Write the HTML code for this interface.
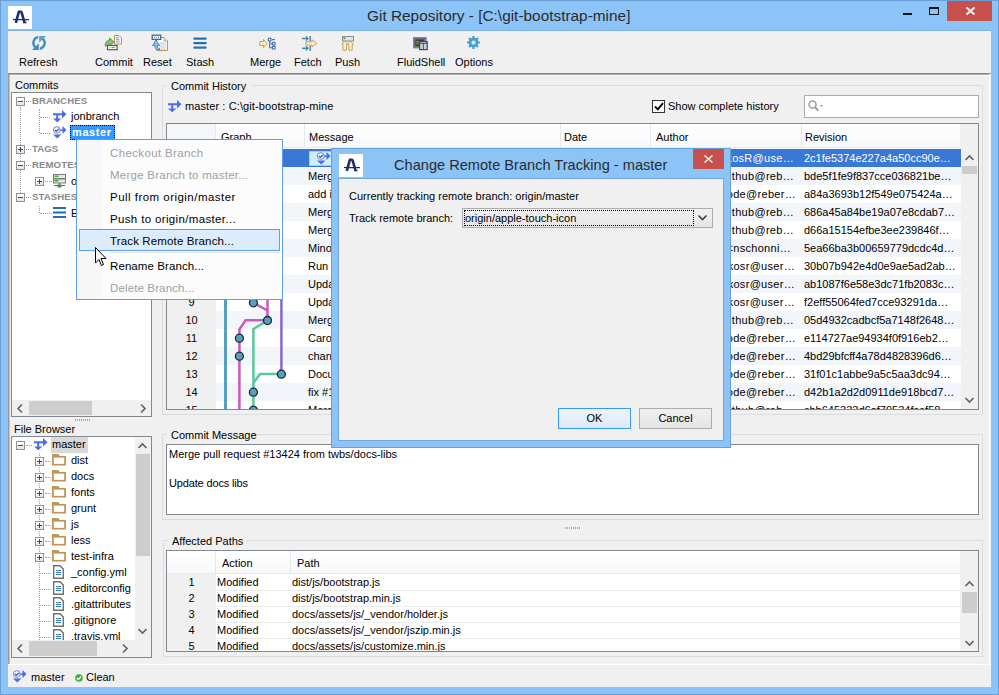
<!DOCTYPE html><html><head><meta charset="utf-8"><style>
*{margin:0;padding:0;box-sizing:border-box}
html,body{width:999px;height:695px;overflow:hidden}
body{position:relative;background:#8cc4f7;font-family:"Liberation Sans",sans-serif;font-size:11px;color:#000}
div{position:absolute}
.t{white-space:nowrap}
svg{position:absolute;overflow:visible}
</style></head><body>
<div style="position:absolute;left:0px;top:0px;width:999px;height:695px;border:1px solid #6a9fd6"></div>
<div style="position:absolute;left:8px;top:6px;width:24px;height:23px;background:#fff"></div>
<svg style="left:8px;top:6px" width="24" height="23" viewBox="0 0 24 23"><path d="M7.8 16.8 L10.9 5.6" stroke="#1d2d6b" stroke-width="2.6" fill="none"/><path d="M10 5.6 H13.8" stroke="#1d2d6b" stroke-width="2.2"/><path d="M13.4 5.6 L16.6 16.8" stroke="#1d2d6b" stroke-width="2.6" fill="none"/><path d="M15.5 16.6 H18.5" stroke="#1d2d6b" stroke-width="1.4"/><path d="M5 13.4 Q8 13.8 9 13.6 L21 13.6" stroke="#1d2d6b" stroke-width="1.4" fill="none"/></svg>
<div class="t" style="left:367px;top:7px;font-size:15.4px;line-height:18px;color:#2b2b2b;font-weight:normal;">Git Repository - [C:\git-bootstrap-mine]</div>
<div style="position:absolute;left:903px;top:13px;width:9px;height:2px;background:#111"></div>
<div style="position:absolute;left:929px;top:7px;width:10px;height:8px;border:1px solid #111;border-top-width:2px"></div>
<div style="position:absolute;left:947px;top:1px;width:45px;height:20px;background:#c7504c"></div>
<svg style="left:966px;top:7px" width="9" height="8"><path d="M0.5 0.5 L8.5 7.5 M8.5 0.5 L0.5 7.5" stroke="#fff" stroke-width="1.8"/></svg>
<div style="position:absolute;left:8px;top:31px;width:983px;height:656px;background:#f0f0f0"></div>
<div style="position:absolute;left:8px;top:30px;width:983px;height:1px;background:#7fb3e6"></div>
<div class="t" style="left:19px;top:56px;font-size:11px;line-height:13px;color:#000;font-weight:normal;">Refresh</div>
<div class="t" style="left:95px;top:56px;font-size:11px;line-height:13px;color:#000;font-weight:normal;">Commit</div>
<div class="t" style="left:143px;top:56px;font-size:11px;line-height:13px;color:#000;font-weight:normal;">Reset</div>
<div class="t" style="left:186px;top:56px;font-size:11px;line-height:13px;color:#000;font-weight:normal;">Stash</div>
<div class="t" style="left:250px;top:56px;font-size:11px;line-height:13px;color:#000;font-weight:normal;">Merge</div>
<div class="t" style="left:294px;top:56px;font-size:11px;line-height:13px;color:#000;font-weight:normal;">Fetch</div>
<div class="t" style="left:335px;top:56px;font-size:11px;line-height:13px;color:#000;font-weight:normal;">Push</div>
<div class="t" style="left:397px;top:56px;font-size:11px;line-height:13px;color:#000;font-weight:normal;">FluidShell</div>
<div class="t" style="left:455px;top:56px;font-size:11px;line-height:13px;color:#000;font-weight:normal;">Options</div>
<div style="position:absolute;left:8px;top:73px;width:983px;height:1px;background:#8a8a8a"></div>
<svg style="left:31px;top:35px" width="16" height="16" viewBox="0 0 16 16"><path d="M7.2 2.2 A5.9 5.9 0 0 0 4.2 12.3" stroke="#3f8bc2" stroke-width="2.3" fill="none"/><path d="M1 14.9 H7.8 V8.3 Z" fill="#3f8bc2"/><path d="M8.8 13.8 A5.9 5.9 0 0 0 11.8 3.7" stroke="#3f8bc2" stroke-width="2.3" fill="none"/><path d="M8.2 1 H15 L8.2 7.7 Z" fill="#5a9fd0"/></svg>
<svg style="left:104px;top:34px" width="19" height="17" viewBox="0 0 19 17"><path d="M10.5 1.5 H15 L17.5 4 V10 H10.5 Z" fill="#fff" stroke="#c0904e"/><path d="M12 3.8 H15 M12 5.8 H15.5 M12 7.8 H15.5" stroke="#4a88c8" stroke-width="0.9"/><path d="M1.2 11.5 Q1 7 5.5 6 V4 L10 8 L6 11.5 V9.5 Q3.2 9.5 1.5 12.5 Z" fill="#86c486" stroke="#3a8a3a" stroke-width="0.8"/><rect x="3.5" y="11.5" width="9.6" height="4.2" fill="#fff" stroke="#5a5a5a" stroke-width="1.2"/><path d="M5.5 13.6 H6.3 M7.5 13.6 H11" stroke="#888" stroke-width="1"/></svg>
<svg style="left:151px;top:34px" width="18" height="18" viewBox="0 0 18 18"><path d="M5.5 3.5 H13 L16.5 7 V16.5 H5.5 Z" fill="#fff" stroke="#c0904e"/><path d="M13 3.5 V7 H16.5" fill="#f5e6c0" stroke="#c0904e" stroke-width="0.8"/><path d="M8 9 H15 M8 11 H15 M8 13 H15 M8 15 H15" stroke="#a8b8d0" stroke-width="0.8"/><rect x="1.2" y="1.2" width="8.5" height="4.2" fill="#fff" stroke="#2a6ab0" stroke-width="1.3"/><path d="M3 3.3 H3.9 M5 3.3 H5.9 M7 3.3 H7.9" stroke="#2a6ab0" stroke-width="1"/><path d="M1.5 11.5 L5 6 L8.5 11.5 H6.5 V13 Q6.5 14.5 8.5 14.5 V16 Q4 16 4 13 V11.5 Z" fill="#8cc0e6" stroke="#3a7ab0" stroke-width="0.8"/></svg>
<svg style="left:193px;top:37px" width="14" height="12"><rect x="0.5" y="0.5" width="13" height="2.2" fill="#2a6ab0"/><rect x="0.5" y="5" width="13" height="2.2" fill="#2a6ab0"/><rect x="0.5" y="9.5" width="13" height="2.2" fill="#2a6ab0"/></svg>
<svg style="left:259px;top:37px" width="18" height="13" viewBox="0 0 18 13"><path d="M0.8 4.5 H4.5 V2.3 L8 6.5 L4.5 10.7 V8.5 H0.8 Z" fill="#fdf0cc" stroke="#c8a060" stroke-width="1"/><rect x="9.4" y="1.3" width="2.6" height="2.6" fill="#fff" stroke="#4a70b0" stroke-width="1.1"/><rect x="13.4" y="5.4" width="2.6" height="2.6" fill="#fff" stroke="#4a70b0" stroke-width="1.1"/><rect x="13.4" y="9.4" width="2.6" height="2.6" fill="#fff" stroke="#4a70b0" stroke-width="1.1"/><path d="M10.7 4 V10.7 H13.3 M10.7 6.7 H13.3 M13 2.6 H16" stroke="#4a70b0" stroke-width="1.1" fill="none"/></svg>
<svg style="left:301px;top:35px" width="18" height="17" viewBox="0 0 18 17"><path d="M1 3.5 H6.5 M5 1.5 L7 3.5 L5 5.5 M1 13.3 H6.5 M5 11.3 L7 13.3 L5 15.3" stroke="#4a88b8" stroke-width="1.4" fill="none"/><path d="M9.2 1 V6 M9.2 11 V16" stroke="#4a6a90" stroke-width="1.2"/><path d="M4.8 6.8 H11 V4.8 L15.8 8.4 L11 12 V10 H4.8 Z" fill="#fdf0cc" stroke="#c8a060" stroke-width="1"/></svg>
<svg style="left:341px;top:35px" width="14" height="16" viewBox="0 0 14 16"><rect x="1.5" y="1.5" width="11" height="4.5" fill="#dfe3f0" stroke="#8a8a8a"/><rect x="2.5" y="2.5" width="2" height="1.6" fill="#2a2"/><path d="M2 15.2 V9.5 H0.8 L3.7 6 L6.6 9.5 H5.4 V15.2 Z M7.8 15.2 V9.5 H6.6 L9.5 6 L12.4 9.5 H11.2 V15.2 Z" fill="#fdf0cc" stroke="#c8a060" stroke-width="1"/></svg>
<svg style="left:413px;top:37px" width="15" height="13" viewBox="0 0 15 13"><rect x="0.7" y="0.7" width="12.3" height="10" fill="#5a5550" stroke="#5a8ac8" stroke-width="1.4"/><rect x="2" y="2" width="9.6" height="7.4" fill="#3c3a38" stroke="#8a8a8a" stroke-width="0.6"/><path d="M3 4.6 H6.5 M3 6.8 H6.5" stroke="#3c3" stroke-width="1.1"/><rect x="6.6" y="4.6" width="7.6" height="8" fill="#d0d0d8" stroke="#3a4a6a" stroke-width="1.2"/><path d="M6.6 6.4 H14.2 M10.4 6.4 V12.6" stroke="#3a4a6a" stroke-width="0.9"/></svg>
<svg style="left:467px;top:36px" width="13" height="13" viewBox="0 0 13 13"><path d="M10.95 5.32 L12.91 5.40 L12.91 7.60 L10.95 7.68 L10.48 8.81 L11.81 10.25 L10.25 11.81 L8.81 10.48 L7.68 10.95 L7.60 12.91 L5.40 12.91 L5.32 10.95 L4.19 10.48 L2.75 11.81 L1.19 10.25 L2.52 8.81 L2.05 7.68 L0.09 7.60 L0.09 5.40 L2.05 5.32 L2.52 4.19 L1.19 2.75 L2.75 1.19 L4.19 2.52 L5.32 2.05 L5.40 0.09 L7.60 0.09 L7.68 2.05 L8.81 2.52 L10.25 1.19 L11.81 2.75 L10.48 4.19Z" fill="#4a9fd0"/><circle cx="6.5" cy="6.5" r="4.7" fill="#4a9fd0"/><circle cx="6.5" cy="6.5" r="2" fill="#f0f0f0"/></svg>
<div style="position:absolute;left:8px;top:74px;width:1px;height:590px;background:#989898"></div>
<div style="position:absolute;left:9px;top:75px;width:1px;height:589px;background:#c4c4c4"></div>
<div style="position:absolute;left:9px;top:74px;width:980px;height:1px;background:#a8a8a8"></div>
<div style="position:absolute;left:10px;top:75px;width:979px;height:1px;background:#fafafa"></div>
<div style="position:absolute;left:989px;top:74px;width:1px;height:590px;background:#fff"></div>
<div class="t" style="left:15px;top:79px;font-size:11px;line-height:13px;color:#000;font-weight:normal;">Commits</div>
<div style="position:absolute;left:11px;top:92px;width:141px;height:325px;background:#fff;border:1px solid #828790"></div>
<div style="position:absolute;left:16px;top:97px;width:9px;height:9px;border:1px solid #919191;background:linear-gradient(#fff,#e6e6e6)"></div>
<div style="position:absolute;left:18px;top:101px;width:5px;height:1px;background:#2a4a8a"></div>
<div style="position:absolute;left:26px;top:101px;width:5px;height:1px;border-top:1px dotted #a0a0a0"></div>
<div class="t" style="left:32px;top:95px;font-size:9.6px;line-height:11px;color:#8a8a8a;font-weight:bold;letter-spacing:0.1px">BRANCHES</div>
<div style="position:absolute;left:20px;top:107px;width:1px;height:90px;border-left:1px dotted #a0a0a0"></div>
<div style="position:absolute;left:39px;top:109px;width:1px;height:24px;border-left:1px dotted #a0a0a0"></div>
<div style="position:absolute;left:40px;top:117px;width:10px;height:1px;border-top:1px dotted #a0a0a0"></div>
<div style="position:absolute;left:40px;top:133px;width:10px;height:1px;border-top:1px dotted #a0a0a0"></div>
<svg style="left:53px;top:110px" width="14" height="13" viewBox="0 0 14 13"><path d="M0 3.3 H9 V0 L13.5 4.2 L9 8.4 V5.2 H0 Z" fill="#4a6cf0"/><rect x="3.2" y="5" width="2" height="4" fill="#4a6cf0"/><path d="M0 8.5 H8.4 L4.2 12.2 Z" fill="#4a6cf0"/></svg>
<div class="t" style="left:71px;top:110px;font-size:11px;line-height:13px;color:#000;font-weight:normal;">jonbranch</div>
<svg style="left:53px;top:126px" width="14" height="13" viewBox="0 0 14 13"><path d="M6 3.5 H9.5 V0 L13.5 4 L9.5 8 V5 H6 Z" fill="#4a6cf0"/><circle cx="3.8" cy="4" r="3.4" fill="#f4f4f8" stroke="#6a86e0" stroke-width="1"/><path d="M2 4 L3.4 5.4 L5.8 2.8" stroke="#3050b0" stroke-width="1.2" fill="none"/><path d="M0 8.6 H8.4 L4.2 12.4 Z" fill="#4a6cf0"/></svg>
<div style="position:absolute;left:70px;top:125px;width:45px;height:15px;background:#3399ff;border:1px dotted #000"></div>
<div class="t" style="left:72px;top:126px;font-size:11px;line-height:13px;color:#fff;font-weight:bold;letter-spacing:0.6px">master</div>
<div style="position:absolute;left:16px;top:145px;width:9px;height:9px;border:1px solid #919191;background:linear-gradient(#fff,#e6e6e6)"></div>
<div style="position:absolute;left:18px;top:149px;width:5px;height:1px;background:#2a4a8a"></div>
<div style="position:absolute;left:20px;top:147px;width:1px;height:5px;background:#2a4a8a"></div>
<div style="position:absolute;left:26px;top:149px;width:5px;height:1px;border-top:1px dotted #a0a0a0"></div>
<div class="t" style="left:32px;top:143px;font-size:9.6px;line-height:11px;color:#8a8a8a;font-weight:bold;letter-spacing:0.1px">TAGS</div>
<div style="position:absolute;left:16px;top:161px;width:9px;height:9px;border:1px solid #919191;background:linear-gradient(#fff,#e6e6e6)"></div>
<div style="position:absolute;left:18px;top:165px;width:5px;height:1px;background:#2a4a8a"></div>
<div style="position:absolute;left:26px;top:165px;width:5px;height:1px;border-top:1px dotted #a0a0a0"></div>
<div class="t" style="left:32px;top:159px;font-size:9.6px;line-height:11px;color:#8a8a8a;font-weight:bold;letter-spacing:0.1px">REMOTES</div>
<div style="position:absolute;left:35px;top:177px;width:9px;height:9px;border:1px solid #919191;background:linear-gradient(#fff,#e6e6e6)"></div>
<div style="position:absolute;left:37px;top:181px;width:5px;height:1px;background:#2a4a8a"></div>
<div style="position:absolute;left:39px;top:179px;width:1px;height:5px;background:#2a4a8a"></div>
<div style="position:absolute;left:45px;top:181px;width:7px;height:1px;border-top:1px dotted #a0a0a0"></div>
<svg style="left:53px;top:174px" width="13" height="14" viewBox="0 0 13 14"><rect x="0.5" y="0.5" width="12" height="4" fill="#e8e8e8" stroke="#7a7a7a"/><rect x="0.5" y="5" width="12" height="4" fill="#e8e8e8" stroke="#7a7a7a"/><rect x="1.5" y="1.5" width="4" height="1.5" fill="#4a4"/><rect x="1.5" y="6" width="4" height="1.5" fill="#4a4"/><path d="M6.5 9 V11.5 M1 11.5 H12" stroke="#2a8a2a"/><rect x="4.5" y="10.5" width="4" height="3" fill="#3a9a3a"/></svg>
<div class="t" style="left:71px;top:175px;font-size:11px;line-height:13px;color:#000;font-weight:normal;">origin</div>
<div style="position:absolute;left:16px;top:193px;width:9px;height:9px;border:1px solid #919191;background:linear-gradient(#fff,#e6e6e6)"></div>
<div style="position:absolute;left:18px;top:197px;width:5px;height:1px;background:#2a4a8a"></div>
<div style="position:absolute;left:26px;top:197px;width:5px;height:1px;border-top:1px dotted #a0a0a0"></div>
<div class="t" style="left:32px;top:191px;font-size:9.6px;line-height:11px;color:#8a8a8a;font-weight:bold;letter-spacing:0.1px">STASHES</div>
<div style="position:absolute;left:39px;top:206px;width:1px;height:7px;border-left:1px dotted #a0a0a0"></div>
<div style="position:absolute;left:40px;top:213px;width:12px;height:1px;border-top:1px dotted #a0a0a0"></div>
<svg style="left:53px;top:207px" width="13" height="11"><rect x="0" y="0" width="13" height="2" fill="#2a6ab0"/><rect x="0" y="4.5" width="13" height="2" fill="#2a6ab0"/><rect x="0" y="9" width="13" height="2" fill="#2a6ab0"/></svg>
<div class="t" style="left:71px;top:207px;font-size:11px;line-height:13px;color:#000;font-weight:normal;">Experimental stash</div>
<div style="position:absolute;left:12px;top:400px;width:139px;height:16px;background:#f0f0f0"></div>
<div style="position:absolute;left:29px;top:401px;width:63px;height:14px;background:#cdcdcd"></div>
<svg style="left:17px;top:404px" width="6" height="9"><path d="M5 0.5 L1 4.5 L5 8.5" stroke="#606060" stroke-width="1.6" fill="none"/></svg>
<svg style="left:140px;top:404px" width="6" height="9"><path d="M1 0.5 L5 4.5 L1 8.5" stroke="#606060" stroke-width="1.6" fill="none"/></svg>
<div style="position:absolute;left:75px;top:419px;width:1px;height:2px;background:#a8a8a8"></div>
<div style="position:absolute;left:77px;top:419px;width:1px;height:2px;background:#a8a8a8"></div>
<div style="position:absolute;left:79px;top:419px;width:1px;height:2px;background:#a8a8a8"></div>
<div style="position:absolute;left:81px;top:419px;width:1px;height:2px;background:#a8a8a8"></div>
<div style="position:absolute;left:83px;top:419px;width:1px;height:2px;background:#a8a8a8"></div>
<div style="position:absolute;left:85px;top:419px;width:1px;height:2px;background:#a8a8a8"></div>
<div style="position:absolute;left:87px;top:419px;width:1px;height:2px;background:#a8a8a8"></div>
<div style="position:absolute;left:89px;top:419px;width:1px;height:2px;background:#a8a8a8"></div>
<div class="t" style="left:14px;top:423px;font-size:11px;line-height:13px;color:#000;font-weight:normal;">File Browser</div>
<div style="position:absolute;left:11px;top:436px;width:141px;height:222px;background:#fff;border:1px solid #828790"></div>
<div style="position:absolute;left:16px;top:441px;width:9px;height:9px;border:1px solid #919191;background:linear-gradient(#fff,#e6e6e6)"></div>
<div style="position:absolute;left:18px;top:445px;width:5px;height:1px;background:#2a4a8a"></div>
<div style="position:absolute;left:26px;top:445px;width:6px;height:1px;border-top:1px dotted #a0a0a0"></div>
<svg style="left:34px;top:438px" width="14" height="13" viewBox="0 0 14 13"><path d="M0 3.3 H9 V0 L13.5 4.2 L9 8.4 V5.2 H0 Z" fill="#4a6cf0"/><rect x="3.2" y="5" width="2" height="4" fill="#4a6cf0"/><path d="M0 8.5 H8.4 L4.2 12.2 Z" fill="#4a6cf0"/></svg>
<div style="position:absolute;left:51px;top:437px;width:37px;height:16px;background:#d9d9d9"></div>
<div class="t" style="left:52px;top:438px;font-size:11px;line-height:13px;color:#000;font-weight:normal;">master</div>
<div style="position:absolute;left:39px;top:453px;width:1px;height:187px;border-left:1px dotted #a0a0a0"></div>
<div style="position:absolute;left:35px;top:457px;width:9px;height:9px;border:1px solid #919191;background:linear-gradient(#fff,#e6e6e6)"></div>
<div style="position:absolute;left:37px;top:461px;width:5px;height:1px;background:#2a4a8a"></div>
<div style="position:absolute;left:39px;top:459px;width:1px;height:5px;background:#2a4a8a"></div>
<div style="position:absolute;left:45px;top:461px;width:6px;height:1px;border-top:1px dotted #a0a0a0"></div>
<svg style="left:52px;top:454px" width="14" height="12" viewBox="0 0 14 12"><path d="M0 0 H6 L8 2 H14 V11.6 H0 Z" fill="#bf9558"/><rect x="1.8" y="3.6" width="10.4" height="6.3" fill="#fff"/></svg>
<div class="t" style="left:71px;top:454px;font-size:11px;line-height:13px;color:#000;font-weight:normal;">dist</div>
<div style="position:absolute;left:35px;top:473px;width:9px;height:9px;border:1px solid #919191;background:linear-gradient(#fff,#e6e6e6)"></div>
<div style="position:absolute;left:37px;top:477px;width:5px;height:1px;background:#2a4a8a"></div>
<div style="position:absolute;left:39px;top:475px;width:1px;height:5px;background:#2a4a8a"></div>
<div style="position:absolute;left:45px;top:477px;width:6px;height:1px;border-top:1px dotted #a0a0a0"></div>
<svg style="left:52px;top:470px" width="14" height="12" viewBox="0 0 14 12"><path d="M0 0 H6 L8 2 H14 V11.6 H0 Z" fill="#bf9558"/><rect x="1.8" y="3.6" width="10.4" height="6.3" fill="#fff"/></svg>
<div class="t" style="left:71px;top:470px;font-size:11px;line-height:13px;color:#000;font-weight:normal;">docs</div>
<div style="position:absolute;left:35px;top:489px;width:9px;height:9px;border:1px solid #919191;background:linear-gradient(#fff,#e6e6e6)"></div>
<div style="position:absolute;left:37px;top:493px;width:5px;height:1px;background:#2a4a8a"></div>
<div style="position:absolute;left:39px;top:491px;width:1px;height:5px;background:#2a4a8a"></div>
<div style="position:absolute;left:45px;top:493px;width:6px;height:1px;border-top:1px dotted #a0a0a0"></div>
<svg style="left:52px;top:486px" width="14" height="12" viewBox="0 0 14 12"><path d="M0 0 H6 L8 2 H14 V11.6 H0 Z" fill="#bf9558"/><rect x="1.8" y="3.6" width="10.4" height="6.3" fill="#fff"/></svg>
<div class="t" style="left:71px;top:486px;font-size:11px;line-height:13px;color:#000;font-weight:normal;">fonts</div>
<div style="position:absolute;left:35px;top:505px;width:9px;height:9px;border:1px solid #919191;background:linear-gradient(#fff,#e6e6e6)"></div>
<div style="position:absolute;left:37px;top:509px;width:5px;height:1px;background:#2a4a8a"></div>
<div style="position:absolute;left:39px;top:507px;width:1px;height:5px;background:#2a4a8a"></div>
<div style="position:absolute;left:45px;top:509px;width:6px;height:1px;border-top:1px dotted #a0a0a0"></div>
<svg style="left:52px;top:502px" width="14" height="12" viewBox="0 0 14 12"><path d="M0 0 H6 L8 2 H14 V11.6 H0 Z" fill="#bf9558"/><rect x="1.8" y="3.6" width="10.4" height="6.3" fill="#fff"/></svg>
<div class="t" style="left:71px;top:502px;font-size:11px;line-height:13px;color:#000;font-weight:normal;">grunt</div>
<div style="position:absolute;left:35px;top:521px;width:9px;height:9px;border:1px solid #919191;background:linear-gradient(#fff,#e6e6e6)"></div>
<div style="position:absolute;left:37px;top:525px;width:5px;height:1px;background:#2a4a8a"></div>
<div style="position:absolute;left:39px;top:523px;width:1px;height:5px;background:#2a4a8a"></div>
<div style="position:absolute;left:45px;top:525px;width:6px;height:1px;border-top:1px dotted #a0a0a0"></div>
<svg style="left:52px;top:518px" width="14" height="12" viewBox="0 0 14 12"><path d="M0 0 H6 L8 2 H14 V11.6 H0 Z" fill="#bf9558"/><rect x="1.8" y="3.6" width="10.4" height="6.3" fill="#fff"/></svg>
<div class="t" style="left:71px;top:518px;font-size:11px;line-height:13px;color:#000;font-weight:normal;">js</div>
<div style="position:absolute;left:35px;top:537px;width:9px;height:9px;border:1px solid #919191;background:linear-gradient(#fff,#e6e6e6)"></div>
<div style="position:absolute;left:37px;top:541px;width:5px;height:1px;background:#2a4a8a"></div>
<div style="position:absolute;left:39px;top:539px;width:1px;height:5px;background:#2a4a8a"></div>
<div style="position:absolute;left:45px;top:541px;width:6px;height:1px;border-top:1px dotted #a0a0a0"></div>
<svg style="left:52px;top:534px" width="14" height="12" viewBox="0 0 14 12"><path d="M0 0 H6 L8 2 H14 V11.6 H0 Z" fill="#bf9558"/><rect x="1.8" y="3.6" width="10.4" height="6.3" fill="#fff"/></svg>
<div class="t" style="left:71px;top:534px;font-size:11px;line-height:13px;color:#000;font-weight:normal;">less</div>
<div style="position:absolute;left:35px;top:553px;width:9px;height:9px;border:1px solid #919191;background:linear-gradient(#fff,#e6e6e6)"></div>
<div style="position:absolute;left:37px;top:557px;width:5px;height:1px;background:#2a4a8a"></div>
<div style="position:absolute;left:39px;top:555px;width:1px;height:5px;background:#2a4a8a"></div>
<div style="position:absolute;left:45px;top:557px;width:6px;height:1px;border-top:1px dotted #a0a0a0"></div>
<svg style="left:52px;top:550px" width="14" height="12" viewBox="0 0 14 12"><path d="M0 0 H6 L8 2 H14 V11.6 H0 Z" fill="#bf9558"/><rect x="1.8" y="3.6" width="10.4" height="6.3" fill="#fff"/></svg>
<div class="t" style="left:71px;top:550px;font-size:11px;line-height:13px;color:#000;font-weight:normal;">test-infra</div>
<div style="position:absolute;left:40px;top:573px;width:11px;height:1px;border-top:1px dotted #a0a0a0"></div>
<svg style="left:53px;top:565px" width="11" height="14" viewBox="0 0 11 14"><path d="M0.7 0.7 H7 L10.3 4 V13.3 H0.7 Z" fill="#fff" stroke="#707070" stroke-width="1.4"/><path d="M3 5.5 H8 M3 7.5 H8 M3 9.5 H8" stroke="#3a7ac0"/></svg>
<div class="t" style="left:71px;top:566px;font-size:11px;line-height:13px;color:#000;font-weight:normal;">_config.yml</div>
<div style="position:absolute;left:40px;top:589px;width:11px;height:1px;border-top:1px dotted #a0a0a0"></div>
<svg style="left:53px;top:581px" width="11" height="14" viewBox="0 0 11 14"><path d="M0.7 0.7 H7 L10.3 4 V13.3 H0.7 Z" fill="#fff" stroke="#707070" stroke-width="1.4"/><path d="M3 5.5 H8 M3 7.5 H8 M3 9.5 H8" stroke="#3a7ac0"/></svg>
<div class="t" style="left:71px;top:582px;font-size:11px;line-height:13px;color:#000;font-weight:normal;">.editorconfig</div>
<div style="position:absolute;left:40px;top:605px;width:11px;height:1px;border-top:1px dotted #a0a0a0"></div>
<svg style="left:53px;top:597px" width="11" height="14" viewBox="0 0 11 14"><path d="M0.7 0.7 H7 L10.3 4 V13.3 H0.7 Z" fill="#fff" stroke="#707070" stroke-width="1.4"/><path d="M3 5.5 H8 M3 7.5 H8 M3 9.5 H8" stroke="#3a7ac0"/></svg>
<div class="t" style="left:71px;top:598px;font-size:11px;line-height:13px;color:#000;font-weight:normal;">.gitattributes</div>
<div style="position:absolute;left:40px;top:621px;width:11px;height:1px;border-top:1px dotted #a0a0a0"></div>
<svg style="left:53px;top:613px" width="11" height="14" viewBox="0 0 11 14"><path d="M0.7 0.7 H7 L10.3 4 V13.3 H0.7 Z" fill="#fff" stroke="#707070" stroke-width="1.4"/><path d="M3 5.5 H8 M3 7.5 H8 M3 9.5 H8" stroke="#3a7ac0"/></svg>
<div class="t" style="left:71px;top:614px;font-size:11px;line-height:13px;color:#000;font-weight:normal;">.gitignore</div>
<div style="position:absolute;left:40px;top:637px;width:11px;height:1px;border-top:1px dotted #a0a0a0"></div>
<svg style="left:53px;top:629px" width="11" height="14" viewBox="0 0 11 14"><path d="M0.7 0.7 H7 L10.3 4 V13.3 H0.7 Z" fill="#fff" stroke="#707070" stroke-width="1.4"/><path d="M3 5.5 H8 M3 7.5 H8 M3 9.5 H8" stroke="#3a7ac0"/></svg>
<div class="t" style="left:71px;top:630px;font-size:11px;line-height:13px;color:#000;font-weight:normal;">.travis.yml</div>
<div style="position:absolute;left:135px;top:437px;width:16px;height:204px;background:#f0f0f0"></div>
<div style="position:absolute;left:136px;top:454px;width:14px;height:102px;background:#cdcdcd"></div>
<svg style="left:138px;top:443px" width="9" height="6"><path d="M0.5 5 L4.5 1 L8.5 5" stroke="#606060" stroke-width="1.6" fill="none"/></svg>
<svg style="left:138px;top:628px" width="9" height="6"><path d="M0.5 1 L4.5 5 L8.5 1" stroke="#606060" stroke-width="1.6" fill="none"/></svg>
<div style="position:absolute;left:12px;top:640px;width:139px;height:17px;background:#f0f0f0"></div>
<div style="position:absolute;left:29px;top:641px;width:68px;height:15px;background:#cdcdcd"></div>
<svg style="left:17px;top:644px" width="6" height="9"><path d="M5 0.5 L1 4.5 L5 8.5" stroke="#606060" stroke-width="1.6" fill="none"/></svg>
<svg style="left:122px;top:644px" width="6" height="9"><path d="M1 0.5 L5 4.5 L1 8.5" stroke="#606060" stroke-width="1.6" fill="none"/></svg>
<div style="position:absolute;left:8px;top:664px;width:983px;height:1px;background:#fff"></div>
<svg style="left:13px;top:670px" width="14" height="13" viewBox="0 0 14 13"><path d="M6 3.5 H9.5 V0 L13.5 4 L9.5 8 V5 H6 Z" fill="#4a6cf0"/><circle cx="3.8" cy="4" r="3.4" fill="#f4f4f8" stroke="#6a86e0" stroke-width="1"/><path d="M2 4 L3.4 5.4 L5.8 2.8" stroke="#3050b0" stroke-width="1.2" fill="none"/><path d="M0 8.6 H8.4 L4.2 12.4 Z" fill="#4a6cf0"/></svg>
<div class="t" style="left:31px;top:671px;font-size:11px;line-height:13px;color:#000;font-weight:normal;">master</div>
<svg style="left:75px;top:674px" width="8" height="8"><circle cx="4" cy="4" r="3.8" fill="#3cb043"/><path d="M2 4 L3.5 5.5 L6 2.5" stroke="#fff" stroke-width="1.2" fill="none"/></svg>
<div class="t" style="left:86px;top:671px;font-size:11px;line-height:13px;color:#000;font-weight:normal;">Clean</div>
<div style="position:absolute;left:162px;top:85px;width:821px;height:330px;border:1px solid #dcdcdc;border-bottom-color:#dcdcdc"></div>
<div style="position:absolute;left:167px;top:84px;width:84px;height:3px;background:#f0f0f0"></div>
<div class="t" style="left:171px;top:80px;font-size:11px;line-height:13px;color:#000;font-weight:normal;">Commit History</div>
<svg style="left:168px;top:100px" width="14" height="13" viewBox="0 0 14 13"><path d="M0 3.3 H9 V0 L13.5 4.2 L9 8.4 V5.2 H0 Z" fill="#4a6cf0"/><rect x="3.2" y="5" width="2" height="4" fill="#4a6cf0"/><path d="M0 8.5 H8.4 L4.2 12.2 Z" fill="#4a6cf0"/></svg>
<div class="t" style="left:185px;top:100px;font-size:11px;line-height:13px;color:#000;font-weight:normal;letter-spacing:0.1px">master : C:\git-bootstrap-mine</div>
<div style="position:absolute;left:652px;top:100px;width:13px;height:13px;background:#fff;border:1px solid #333"></div>
<svg style="left:654px;top:102px" width="10" height="9"><path d="M1 4.5 L3.8 7.3 L9 1.2" stroke="#000" stroke-width="1.8" fill="none"/></svg>
<div class="t" style="left:668px;top:100px;font-size:11px;line-height:13px;color:#000;font-weight:normal;">Show complete history</div>
<div style="position:absolute;left:804px;top:95px;width:175px;height:23px;background:#fff;border:1px solid #ababab"></div>
<svg style="left:808px;top:100px" width="16" height="12" viewBox="0 0 16 12"><circle cx="4.5" cy="4.5" r="3.5" stroke="#a0a0a0" stroke-width="1.6" fill="none"/><path d="M7 7 L10 10.5" stroke="#a0a0a0" stroke-width="2"/><path d="M11.5 5 H15 L13.25 7 Z" fill="#a0a0a0"/></svg>
<div style="position:absolute;left:166px;top:123px;width:813px;height:287px;background:#fff;border:1px solid #828790"></div>
<div style="position:absolute;left:167px;top:124px;width:793px;height:24px;background:linear-gradient(#ffffff,#f7f8fa)"></div>
<div style="position:absolute;left:960px;top:124px;width:18px;height:285px;background:#f0f0f0"></div>
<div style="position:absolute;left:167px;top:124px;width:49px;height:24px;background:#f3f6fb"></div>
<div style="position:absolute;left:215px;top:124px;width:1px;height:24px;background:#e3e8f0"></div>
<div style="position:absolute;left:304px;top:124px;width:1px;height:24px;background:#e3e8f0"></div>
<div style="position:absolute;left:560px;top:124px;width:1px;height:24px;background:#e3e8f0"></div>
<div style="position:absolute;left:650px;top:124px;width:1px;height:24px;background:#e3e8f0"></div>
<div style="position:absolute;left:801px;top:124px;width:1px;height:24px;background:#e3e8f0"></div>
<div style="position:absolute;left:167px;top:147px;width:793px;height:1px;background:#e5ebf3"></div>
<div class="t" style="left:221px;top:131px;font-size:11px;line-height:13px;color:#000;font-weight:normal;">Graph</div>
<div class="t" style="left:309px;top:131px;font-size:11px;line-height:13px;color:#000;font-weight:normal;">Message</div>
<div class="t" style="left:564px;top:131px;font-size:11px;line-height:13px;color:#000;font-weight:normal;">Date</div>
<div class="t" style="left:656px;top:131px;font-size:11px;line-height:13px;color:#000;font-weight:normal;">Author</div>
<div class="t" style="left:805px;top:131px;font-size:11px;line-height:13px;color:#000;font-weight:normal;">Revision</div>
<div style="left:167px;top:149px;width:811px;height:260px;overflow:hidden">
<div style="left:0;top:0px;width:794px;height:18px;background:#3a78d8"></div>
<div style="left:0;top:0px;width:49px;height:18px;background:#f0f0f0"></div>
<div class="t" style="left:0;top:3px;width:49px;text-align:center;font-size:11px;line-height:13px">1</div>
<div style="left:142px;top:2px;width:170px;height:15px;background:#cdeefa;border:1px solid #b8c8c8"></div>
<svg style="left:150px;top:3px" width="14" height="13" viewBox="0 0 14 13"><path d="M6 3.5 H9.5 V0 L13.5 4 L9.5 8 V5 H6 Z" fill="#4a6cf0"/><circle cx="3.8" cy="4" r="3.4" fill="#f4f4f8" stroke="#6a86e0"/><path d="M2 4 L3.4 5.4 L5.8 2.8" stroke="#3050b0" stroke-width="1.2" fill="none"/><path d="M0 8.6 H8.4 L4.2 12.4 Z" fill="#4a6cf0"/></svg>
<div class="t" style="left:398px;top:3px;font-size:11px;line-height:13px;color:#fff">2014-04-22</div>
<div class="t" style="right:184px;top:3px;font-size:11px;line-height:13px;color:#fff;text-align:right;letter-spacing:0.3px">&lt;xhmikosR@use…</div>
<div class="t" style="left:637px;top:3px;font-size:11px;line-height:13px;color:#fff">2c1fe5374e227a4a50cc90e…</div>
<div style="left:0;top:18px;width:794px;height:18px;background:#f2f5fa"></div>
<div style="left:0;top:18px;width:49px;height:18px;background:#f0f0f0"></div>
<div class="t" style="left:0;top:21px;width:49px;text-align:center;font-size:11px;line-height:13px">2</div>
<div class="t" style="left:141px;top:21px;font-size:11px;line-height:13px;color:#000">Merge pull request #13410 from twbs/fix-13386</div>
<div class="t" style="left:398px;top:21px;font-size:11px;line-height:13px;color:#000">2014-04-22</div>
<div class="t" style="right:184px;top:21px;font-size:11px;line-height:13px;color:#000;text-align:right;letter-spacing:0.3px">&lt;github@reb…</div>
<div class="t" style="left:637px;top:21px;font-size:11px;line-height:13px;color:#000">bde5f1fe9f837cce036821be…</div>
<div style="left:0;top:36px;width:794px;height:18px;background:#fff"></div>
<div style="left:0;top:36px;width:49px;height:18px;background:#f0f0f0"></div>
<div class="t" style="left:0;top:39px;width:49px;text-align:center;font-size:11px;line-height:13px">3</div>
<div class="t" style="left:141px;top:39px;font-size:11px;line-height:13px;color:#000">add isolate to the list</div>
<div class="t" style="left:398px;top:39px;font-size:11px;line-height:13px;color:#000">2014-04-21</div>
<div class="t" style="right:182px;top:39px;font-size:11px;line-height:13px;color:#000;text-align:right;letter-spacing:0.3px">&lt;code@reber…</div>
<div class="t" style="left:637px;top:39px;font-size:11px;line-height:13px;color:#000">a84a3693b12f549e075424a…</div>
<div style="left:0;top:54px;width:794px;height:18px;background:#f2f5fa"></div>
<div style="left:0;top:54px;width:49px;height:18px;background:#f0f0f0"></div>
<div class="t" style="left:0;top:57px;width:49px;text-align:center;font-size:11px;line-height:13px">4</div>
<div class="t" style="left:141px;top:57px;font-size:11px;line-height:13px;color:#000">Merge pull request #13397 from twbs/docs-sty</div>
<div class="t" style="left:398px;top:57px;font-size:11px;line-height:13px;color:#000">2014-04-21</div>
<div class="t" style="right:184px;top:57px;font-size:11px;line-height:13px;color:#000;text-align:right;letter-spacing:0.3px">&lt;github@reb…</div>
<div class="t" style="left:637px;top:57px;font-size:11px;line-height:13px;color:#000">686a45a84be19a07e8cdab7…</div>
<div style="left:0;top:72px;width:794px;height:18px;background:#fff"></div>
<div style="left:0;top:72px;width:49px;height:18px;background:#f0f0f0"></div>
<div class="t" style="left:0;top:75px;width:49px;text-align:center;font-size:11px;line-height:13px">5</div>
<div class="t" style="left:141px;top:75px;font-size:11px;line-height:13px;color:#000">Merge branch 'master' into docs-styles</div>
<div class="t" style="left:398px;top:75px;font-size:11px;line-height:13px;color:#000">2014-04-21</div>
<div class="t" style="right:184px;top:75px;font-size:11px;line-height:13px;color:#000;text-align:right;letter-spacing:0.3px">&lt;github@reb…</div>
<div class="t" style="left:637px;top:75px;font-size:11px;line-height:13px;color:#000">d66a15154efbe3ee239846f…</div>
<div style="left:0;top:90px;width:794px;height:18px;background:#f2f5fa"></div>
<div style="left:0;top:90px;width:49px;height:18px;background:#f0f0f0"></div>
<div class="t" style="left:0;top:93px;width:49px;text-align:center;font-size:11px;line-height:13px">6</div>
<div class="t" style="left:141px;top:93px;font-size:11px;line-height:13px;color:#000">Minor tweaks</div>
<div class="t" style="left:398px;top:93px;font-size:11px;line-height:13px;color:#000">2014-04-21</div>
<div class="t" style="right:187px;top:93px;font-size:11px;line-height:13px;color:#000;text-align:right;letter-spacing:0.3px">&lt;nschonni…</div>
<div class="t" style="left:637px;top:93px;font-size:11px;line-height:13px;color:#000">5ea66ba3b00659779dcdc4d…</div>
<div style="left:0;top:108px;width:794px;height:18px;background:#fff"></div>
<div style="left:0;top:108px;width:49px;height:18px;background:#f0f0f0"></div>
<div class="t" style="left:0;top:111px;width:49px;text-align:center;font-size:11px;line-height:13px">7</div>
<div class="t" style="left:141px;top:111px;font-size:11px;line-height:13px;color:#000">Run grunt</div>
<div class="t" style="left:398px;top:111px;font-size:11px;line-height:13px;color:#000">2014-04-21</div>
<div class="t" style="right:183px;top:111px;font-size:11px;line-height:13px;color:#000;text-align:right;letter-spacing:0.3px">&lt;xhmikosr@user…</div>
<div class="t" style="left:637px;top:111px;font-size:11px;line-height:13px;color:#000">30b07b942e4d0e9ae5ad2ab…</div>
<div style="left:0;top:126px;width:794px;height:18px;background:#f2f5fa"></div>
<div style="left:0;top:126px;width:49px;height:18px;background:#f0f0f0"></div>
<div class="t" style="left:0;top:129px;width:49px;text-align:center;font-size:11px;line-height:13px">8</div>
<div class="t" style="left:141px;top:129px;font-size:11px;line-height:13px;color:#000">Update jQuery</div>
<div class="t" style="left:398px;top:129px;font-size:11px;line-height:13px;color:#000">2014-04-21</div>
<div class="t" style="right:183px;top:129px;font-size:11px;line-height:13px;color:#000;text-align:right;letter-spacing:0.3px">&lt;xhmikosr@user…</div>
<div class="t" style="left:637px;top:129px;font-size:11px;line-height:13px;color:#000">ab1087f6e58e3dc71fb2083c…</div>
<div style="left:0;top:144px;width:794px;height:18px;background:#fff"></div>
<div style="left:0;top:144px;width:49px;height:18px;background:#f0f0f0"></div>
<div class="t" style="left:0;top:147px;width:49px;text-align:center;font-size:11px;line-height:13px">9</div>
<div class="t" style="left:141px;top:147px;font-size:11px;line-height:13px;color:#000">Update docs</div>
<div class="t" style="left:398px;top:147px;font-size:11px;line-height:13px;color:#000">2014-04-21</div>
<div class="t" style="right:183px;top:147px;font-size:11px;line-height:13px;color:#000;text-align:right;letter-spacing:0.3px">&lt;xhmikosr@user…</div>
<div class="t" style="left:637px;top:147px;font-size:11px;line-height:13px;color:#000">f2eff55064fed7cce93291da…</div>
<div style="left:0;top:162px;width:794px;height:18px;background:#f2f5fa"></div>
<div style="left:0;top:162px;width:49px;height:18px;background:#f0f0f0"></div>
<div class="t" style="left:0;top:165px;width:49px;text-align:center;font-size:11px;line-height:13px">10</div>
<div class="t" style="left:141px;top:165px;font-size:11px;line-height:13px;color:#000">Merge pull request #13399 from twbs/blockquote</div>
<div class="t" style="left:398px;top:165px;font-size:11px;line-height:13px;color:#000">2014-04-20</div>
<div class="t" style="right:184px;top:165px;font-size:11px;line-height:13px;color:#000;text-align:right;letter-spacing:0.3px">&lt;github@reb…</div>
<div class="t" style="left:637px;top:165px;font-size:11px;line-height:13px;color:#000">05d4932cadbcf5a7148f2648…</div>
<div style="left:0;top:180px;width:794px;height:18px;background:#fff"></div>
<div style="left:0;top:180px;width:49px;height:18px;background:#f0f0f0"></div>
<div class="t" style="left:0;top:183px;width:49px;text-align:center;font-size:11px;line-height:13px">11</div>
<div class="t" style="left:141px;top:183px;font-size:11px;line-height:13px;color:#000">Caro</div>
<div class="t" style="left:398px;top:183px;font-size:11px;line-height:13px;color:#000">2014-04-20</div>
<div class="t" style="right:182px;top:183px;font-size:11px;line-height:13px;color:#000;text-align:right;letter-spacing:0.3px">&lt;code@reber…</div>
<div class="t" style="left:637px;top:183px;font-size:11px;line-height:13px;color:#000">e114727ae94934f0f916eb2…</div>
<div style="left:0;top:198px;width:794px;height:18px;background:#f2f5fa"></div>
<div style="left:0;top:198px;width:49px;height:18px;background:#f0f0f0"></div>
<div class="t" style="left:0;top:201px;width:49px;text-align:center;font-size:11px;line-height:13px">12</div>
<div class="t" style="left:141px;top:201px;font-size:11px;line-height:13px;color:#000">change</div>
<div class="t" style="left:398px;top:201px;font-size:11px;line-height:13px;color:#000">2014-04-20</div>
<div class="t" style="right:182px;top:201px;font-size:11px;line-height:13px;color:#000;text-align:right;letter-spacing:0.3px">&lt;code@reber…</div>
<div class="t" style="left:637px;top:201px;font-size:11px;line-height:13px;color:#000">4bd29bfcff4a78d4828396d6…</div>
<div style="left:0;top:216px;width:794px;height:18px;background:#fff"></div>
<div style="left:0;top:216px;width:49px;height:18px;background:#f0f0f0"></div>
<div class="t" style="left:0;top:219px;width:49px;text-align:center;font-size:11px;line-height:13px">13</div>
<div class="t" style="left:141px;top:219px;font-size:11px;line-height:13px;color:#000">Document</div>
<div class="t" style="left:398px;top:219px;font-size:11px;line-height:13px;color:#000">2014-04-20</div>
<div class="t" style="right:182px;top:219px;font-size:11px;line-height:13px;color:#000;text-align:right;letter-spacing:0.3px">&lt;code@reber…</div>
<div class="t" style="left:637px;top:219px;font-size:11px;line-height:13px;color:#000">31f01c1abbe9a5c5aa3dc94…</div>
<div style="left:0;top:234px;width:794px;height:18px;background:#f2f5fa"></div>
<div style="left:0;top:234px;width:49px;height:18px;background:#f0f0f0"></div>
<div class="t" style="left:0;top:237px;width:49px;text-align:center;font-size:11px;line-height:13px">14</div>
<div class="t" style="left:141px;top:237px;font-size:11px;line-height:13px;color:#000">fix #13380</div>
<div class="t" style="left:398px;top:237px;font-size:11px;line-height:13px;color:#000">2014-04-20</div>
<div class="t" style="right:182px;top:237px;font-size:11px;line-height:13px;color:#000;text-align:right;letter-spacing:0.3px">&lt;code@reber…</div>
<div class="t" style="left:637px;top:237px;font-size:11px;line-height:13px;color:#000">d42b1a2d2d0911de918bcd7…</div>
<div style="left:0;top:252px;width:794px;height:18px;background:#fff"></div>
<div style="left:0;top:252px;width:49px;height:18px;background:#f0f0f0"></div>
<div class="t" style="left:0;top:255px;width:49px;text-align:center;font-size:11px;line-height:13px">15</div>
<div class="t" style="left:141px;top:255px;font-size:11px;line-height:13px;color:#000">Merge</div>
<div class="t" style="left:398px;top:255px;font-size:11px;line-height:13px;color:#000">2014-04-20</div>
<div class="t" style="right:184px;top:255px;font-size:11px;line-height:13px;color:#000;text-align:right;letter-spacing:0.3px">&lt;github@reb…</div>
<div class="t" style="left:637px;top:255px;font-size:11px;line-height:13px;color:#000">cbb645333d6af79534fcef58…</div>
</div>
<div style="position:absolute;left:961px;top:149px;width:17px;height:260px;background:#f0f0f0"></div>
<div style="position:absolute;left:962px;top:166px;width:15px;height:8px;background:#cdcdcd"></div>
<svg style="left:965px;top:155px" width="9" height="6"><path d="M0.5 5 L4.5 1 L8.5 5" stroke="#606060" stroke-width="1.6" fill="none"/></svg>
<svg style="left:965px;top:397px" width="9" height="6"><path d="M0.5 1 L4.5 5 L8.5 1" stroke="#606060" stroke-width="1.6" fill="none"/></svg>
<div style="left:167px;top:149px;width:793px;height:260px;overflow:hidden"><svg style="left:0;top:0" width="793" height="260"><g transform="translate(-167,-149)"><path d="M225.5 149 V409" stroke="#55a0c0" stroke-width="3" fill="none"/><path d="M281.4 149 V374" stroke="#8a68c8" stroke-width="2.5" fill="none"/><path d="M267.5 149 V320.5" stroke="#c85ac0" stroke-width="2.5" fill="none"/><path d="M253.4 302.8 L267.5 310.5" stroke="#c85ac0" stroke-width="2.5" fill="none"/><path d="M267.5 320.3 H245.6 L239.4 329.5 V409" stroke="#c85ac0" stroke-width="2.5" fill="none"/><path d="M267.5 320.5 L253.4 329 V409" stroke="#58c89a" stroke-width="2.5" fill="none"/><path d="M281.4 374 H260 L253.4 383" stroke="#58c89a" stroke-width="2.5" fill="none"/><path d="M253.4 149 V302.8" stroke="#58c89a" stroke-width="2.5" fill="none"/><circle cx="253.4" cy="302.8" r="4" fill="#55a0c0" stroke="#1a2a30" stroke-width="1.3"/><circle cx="267.5" cy="320.5" r="4" fill="#55a0c0" stroke="#1a2a30" stroke-width="1.3"/><circle cx="239.4" cy="338.2" r="4" fill="#55a0c0" stroke="#1a2a30" stroke-width="1.3"/><circle cx="239.4" cy="356.2" r="4" fill="#55a0c0" stroke="#1a2a30" stroke-width="1.3"/><circle cx="281.4" cy="374.2" r="4" fill="#55a0c0" stroke="#1a2a30" stroke-width="1.3"/><circle cx="253.4" cy="392.2" r="4" fill="#55a0c0" stroke="#1a2a30" stroke-width="1.3"/><circle cx="253.4" cy="410.2" r="4" fill="#55a0c0" stroke="#1a2a30" stroke-width="1.3"/></g></svg></div>
<div style="position:absolute;left:162px;top:434px;width:821px;height:86px;border:1px solid #dcdcdc;border-bottom-color:#dcdcdc"></div>
<div style="position:absolute;left:167px;top:433px;width:82px;height:3px;background:#f0f0f0"></div>
<div class="t" style="left:171px;top:429px;font-size:11px;line-height:13px;color:#000;font-weight:normal;">Commit Message</div>
<div style="position:absolute;left:166px;top:444px;width:813px;height:71px;background:#fff;border:1px solid #828790"></div>
<div class="t" style="left:169px;top:448px;font-size:11px;line-height:13px;color:#000;font-weight:normal;">Merge pull request #13424 from twbs/docs-libs</div>
<div class="t" style="left:169px;top:477px;font-size:11px;line-height:13px;color:#000;font-weight:normal;letter-spacing:-0.15px">Update docs libs</div>
<div style="position:absolute;left:565px;top:527px;width:1px;height:2px;background:#a8a8a8"></div>
<div style="position:absolute;left:567px;top:527px;width:1px;height:2px;background:#a8a8a8"></div>
<div style="position:absolute;left:569px;top:527px;width:1px;height:2px;background:#a8a8a8"></div>
<div style="position:absolute;left:571px;top:527px;width:1px;height:2px;background:#a8a8a8"></div>
<div style="position:absolute;left:573px;top:527px;width:1px;height:2px;background:#a8a8a8"></div>
<div style="position:absolute;left:575px;top:527px;width:1px;height:2px;background:#a8a8a8"></div>
<div style="position:absolute;left:577px;top:527px;width:1px;height:2px;background:#a8a8a8"></div>
<div style="position:absolute;left:579px;top:527px;width:1px;height:2px;background:#a8a8a8"></div>
<div style="position:absolute;left:163px;top:540px;width:820px;height:117px;border:1px solid #dcdcdc;border-bottom-color:#dcdcdc"></div>
<div style="position:absolute;left:168px;top:539px;width:78px;height:3px;background:#f0f0f0"></div>
<div class="t" style="left:172px;top:535px;font-size:11px;line-height:13px;color:#000;font-weight:normal;">Affected Paths</div>
<div style="position:absolute;left:166px;top:550px;width:813px;height:102px;background:#fff;border:1px solid #828790"></div>
<div style="position:absolute;left:167px;top:551px;width:793px;height:23px;background:linear-gradient(#ffffff,#f7f8fa)"></div>
<div style="position:absolute;left:960px;top:551px;width:18px;height:100px;background:#f0f0f0"></div>
<div style="position:absolute;left:215px;top:551px;width:1px;height:23px;background:#e3e8f0"></div>
<div style="position:absolute;left:290px;top:551px;width:1px;height:23px;background:#e3e8f0"></div>
<div style="position:absolute;left:167px;top:573px;width:793px;height:1px;background:#e5ebf3"></div>
<div class="t" style="left:222px;top:557px;font-size:11px;line-height:13px;color:#000;font-weight:normal;">Action</div>
<div class="t" style="left:297px;top:557px;font-size:11px;line-height:13px;color:#000;font-weight:normal;">Path</div>
<div style="left:167px;top:574px;width:793px;height:77px;overflow:hidden">
<div style="left:0;top:0px;width:49px;height:16px;background:#f0f0f0"></div>
<div style="left:49px;top:16px;width:744px;height:1px;background:#ececec"></div>
<div class="t" style="left:0;top:2px;width:49px;text-align:center;line-height:13px">1</div>
<div class="t" style="left:50px;top:2px;line-height:13px">Modified</div>
<div class="t" style="left:125px;top:2px;line-height:13px">dist/js/bootstrap.js</div>
<div style="left:0;top:16px;width:49px;height:16px;background:#f0f0f0"></div>
<div style="left:49px;top:32px;width:744px;height:1px;background:#ececec"></div>
<div class="t" style="left:0;top:18px;width:49px;text-align:center;line-height:13px">2</div>
<div class="t" style="left:50px;top:18px;line-height:13px">Modified</div>
<div class="t" style="left:125px;top:18px;line-height:13px">dist/js/bootstrap.min.js</div>
<div style="left:0;top:32px;width:49px;height:16px;background:#f0f0f0"></div>
<div style="left:49px;top:48px;width:744px;height:1px;background:#ececec"></div>
<div class="t" style="left:0;top:34px;width:49px;text-align:center;line-height:13px">3</div>
<div class="t" style="left:50px;top:34px;line-height:13px">Modified</div>
<div class="t" style="left:125px;top:34px;line-height:13px">docs/assets/js/_vendor/holder.js</div>
<div style="left:0;top:48px;width:49px;height:16px;background:#f0f0f0"></div>
<div style="left:49px;top:64px;width:744px;height:1px;background:#ececec"></div>
<div class="t" style="left:0;top:50px;width:49px;text-align:center;line-height:13px">4</div>
<div class="t" style="left:50px;top:50px;line-height:13px">Modified</div>
<div class="t" style="left:125px;top:50px;line-height:13px">docs/assets/js/_vendor/jszip.min.js</div>
<div style="left:0;top:64px;width:49px;height:16px;background:#f0f0f0"></div>
<div style="left:49px;top:80px;width:744px;height:1px;background:#ececec"></div>
<div class="t" style="left:0;top:66px;width:49px;text-align:center;line-height:13px">5</div>
<div class="t" style="left:50px;top:66px;line-height:13px">Modified</div>
<div class="t" style="left:125px;top:66px;line-height:13px">docs/assets/js/customize.min.js</div>
</div>
<div style="position:absolute;left:961px;top:574px;width:17px;height:77px;background:#f0f0f0"></div>
<div style="position:absolute;left:962px;top:592px;width:15px;height:21px;background:#cdcdcd"></div>
<svg style="left:965px;top:581px" width="9" height="6"><path d="M0.5 5 L4.5 1 L8.5 5" stroke="#606060" stroke-width="1.6" fill="none"/></svg>
<svg style="left:965px;top:640px" width="9" height="6"><path d="M0.5 1 L4.5 5 L8.5 1" stroke="#606060" stroke-width="1.6" fill="none"/></svg>
<div style="position:absolute;left:76px;top:139px;width:207px;height:161px;background:#fcfcfc;border:1px solid #5aa0ef"></div>
<div style="position:absolute;left:77px;top:140px;width:25px;height:159px;background:#f7f7f7"></div>
<div style="position:absolute;left:79px;top:229px;width:201px;height:22px;background:#dcecfc;border:1px solid #5aa0ef"></div>
<div style="position:absolute;left:110px;top:252px;width:171px;height:1px;background:#e0e0e0"></div>
<div class="t" style="left:110px;top:147px;font-size:11.5px;line-height:13px;color:#a0a0a0;font-weight:normal;letter-spacing:0.36px">Checkout Branch</div>
<div class="t" style="left:110px;top:169px;font-size:11.5px;line-height:13px;color:#a0a0a0;font-weight:normal;letter-spacing:0.25px">Merge Branch to master...</div>
<div class="t" style="left:110px;top:191px;font-size:11.5px;line-height:13px;color:#000;font-weight:normal;letter-spacing:0.47px">Pull from origin/master</div>
<div class="t" style="left:110px;top:213px;font-size:11.5px;line-height:13px;color:#000;font-weight:normal;letter-spacing:0.35px">Push to origin/master...</div>
<div class="t" style="left:110px;top:235px;font-size:11.5px;line-height:13px;color:#000;font-weight:normal;letter-spacing:0.14px">Track Remote Branch...</div>
<div class="t" style="left:110px;top:260px;font-size:11.5px;line-height:13px;color:#000;font-weight:normal;letter-spacing:0.09px">Rename Branch...</div>
<div class="t" style="left:110px;top:282px;font-size:11.5px;line-height:13px;color:#a0a0a0;font-weight:normal;letter-spacing:0.13px">Delete Branch...</div>
<svg style="left:95px;top:247px" width="12" height="20" viewBox="0 0 12 20"><path d="M0.5 0.5 V16 L4 12.5 L6.5 18.5 L8.5 17.5 L6 11.5 L11 11.5 Z" fill="#fff" stroke="#000" stroke-width="1"/></svg>
<div style="position:absolute;left:331px;top:148px;width:400px;height:300px;background:#8cc4f7;border:1px solid #6a9fd6"></div>
<div style="position:absolute;left:339px;top:154px;width:24px;height:23px;background:#fff"></div>
<svg style="left:339px;top:154px" width="24" height="23" viewBox="0 0 24 23"><path d="M7.8 16.8 L10.9 5.6" stroke="#1d2d6b" stroke-width="2.6" fill="none"/><path d="M10 5.6 H13.8" stroke="#1d2d6b" stroke-width="2.2"/><path d="M13.4 5.6 L16.6 16.8" stroke="#1d2d6b" stroke-width="2.6" fill="none"/><path d="M15.5 16.6 H18.5" stroke="#1d2d6b" stroke-width="1.4"/><path d="M5 13.4 Q8 13.8 9 13.6 L21 13.6" stroke="#1d2d6b" stroke-width="1.4" fill="none"/></svg>
<div class="t" style="left:394px;top:157px;font-size:14.6px;line-height:17px;color:#2b2b2b;font-weight:normal;">Change Remote Branch Tracking - master</div>
<div style="position:absolute;left:693px;top:149px;width:31px;height:20px;background:#c7504c"></div>
<svg style="left:704px;top:155px" width="9" height="8"><path d="M0.5 0.5 L8.5 7.5 M8.5 0.5 L0.5 7.5" stroke="#fff" stroke-width="1.4"/></svg>
<div style="position:absolute;left:338px;top:178px;width:386px;height:263px;background:#f0f0f0;border:1px solid #74a8dc"></div>
<div class="t" style="left:349px;top:190px;font-size:11px;line-height:13px;color:#000;font-weight:normal;">Currently tracking remote branch: origin/master</div>
<div class="t" style="left:349px;top:212px;font-size:11px;line-height:13px;color:#000;font-weight:normal;">Track remote branch:</div>
<div style="position:absolute;left:462px;top:208px;width:251px;height:20px;background:linear-gradient(#f2f2f2,#e5e5e5);border:1px solid #acacac"></div>
<div style="position:absolute;left:464px;top:210px;width:230px;height:16px;border:1px dotted #000"></div>
<div class="t" style="left:465px;top:212px;font-size:11px;line-height:13px;color:#000;font-weight:normal;">origin/apple-touch-icon</div>
<svg style="left:698px;top:215px" width="9" height="6"><path d="M0.5 0.5 L4.5 4.5 L8.5 0.5" stroke="#404040" stroke-width="1.6" fill="none"/></svg>
<div style="position:absolute;left:558px;top:408px;width:73px;height:21px;background:linear-gradient(#ecf4fc,#dde9f5);border:1px solid #3399ff"></div>
<div class="t" style="left:558px;top:412px;width:73px;text-align:center;line-height:13px">OK</div>
<div style="position:absolute;left:639px;top:408px;width:73px;height:21px;background:linear-gradient(#f0f0f0,#e5e5e5);border:1px solid #acacac"></div>
<div class="t" style="left:639px;top:412px;width:73px;text-align:center;line-height:13px">Cancel</div>
</body></html>
